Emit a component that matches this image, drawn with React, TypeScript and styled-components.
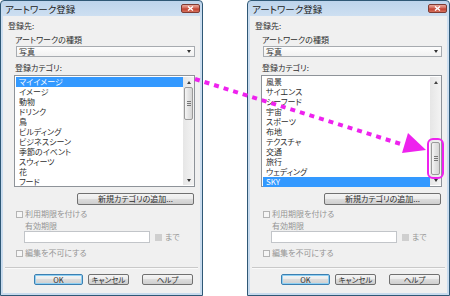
import styled, { createGlobalStyle } from "styled-components";

const GlobalStyle = createGlobalStyle`
  html, body {
    margin: 0;
    padding: 0;
    background: #fff;
  }
  body {
    font-family: "Noto Sans CJK JP", "Liberation Sans", sans-serif;
    font-feature-settings: "palt";
    color: #2e2e2e;
  }
`;

const Page = styled.div`
  position: relative;
  width: 450px;
  height: 296px;
  display: flex;
  gap: 44px;
  overflow: hidden;
`;

const Window = styled.div`
  width: 203px;
  height: 296px;
  box-sizing: border-box;
  border: 1px solid #2f5876;
  border-radius: 4px 4px 0 0;
  background: linear-gradient(#bdd4ec, #cddff1 15px, #c8dbee);
  display: flex;
  flex-direction: column;
`;

const TitleBar = styled.div`
  height: 15px;
  display: flex;
  align-items: center;
  justify-content: space-between;
  padding: 0 2px 0 4px;
`;

const Title = styled.span`
  font-size: 9.5px;
  line-height: 12px;
  color: #222;
`;

const CloseButton = styled.div`
  width: 19px;
  height: 9px;
  box-sizing: border-box;
  border: 1px solid #7e3b33;
  border-radius: 2px;
  background: linear-gradient(#e9a99c, #d36a5c 45%, #c2402f 55%, #d5725f);
  display: flex;
  align-items: center;
  justify-content: center;
`;

const Body = styled.div`
  flex: 1;
  margin: 0 2px 2px;
  background: #f0f0f0;
  padding: 5px 5px 0 5px;
  display: flex;
  flex-direction: column;
`;

const Label = styled.div<{ $disabled?: boolean }>`
  font-size: 8px;
  line-height: 10px;
  height: 10px;
  white-space: nowrap;
  color: ${(p) => (p.$disabled ? "#959595" : "#2e2e2e")};
`;

const Section = styled.div`
  margin-left: 7px;
  display: flex;
  flex-direction: column;
`;

const SubLabel = styled(Label)`
  margin-top: 4px;
`;

const Combo = styled.div`
  margin: 1px 0 0 1px;
  height: 11px;
  box-sizing: border-box;
  border: 1px solid #a7abb0;
  background: linear-gradient(#fdfdfd, #f1f1f1);
  display: flex;
  align-items: center;
  justify-content: space-between;
  padding: 0 3px 0 2px;
  font-size: 8px;
`;

const DownTriangle = styled.span`
  width: 0;
  height: 0;
  border-left: 2.5px solid transparent;
  border-right: 2.5px solid transparent;
  border-top: 3px solid #333;
`;

const UpTriangle = styled.span`
  width: 0;
  height: 0;
  border-left: 2.5px solid transparent;
  border-right: 2.5px solid transparent;
  border-bottom: 3px solid #444;
`;

const CategoryLabel = styled(Label)`
  margin-top: 6px;
`;

const ListBox = styled.div`
  margin: 2px 0 0 -1px;
  height: 112px;
  box-sizing: border-box;
  border: 1px solid #8e9399;
  background: #fff;
  padding: 1px 0 1px 1px;
  display: flex;
`;

const Items = styled.div`
  flex: 1;
  display: flex;
  flex-direction: column;
`;

const Item = styled.div<{ $selected?: boolean }>`
  height: 10px;
  line-height: 10px;
  font-size: 8px;
  padding-left: 3px;
  white-space: nowrap;
  color: ${(p) => (p.$selected ? "#fff" : "#2e2e2e")};
  background: ${(p) => (p.$selected ? "#3399ff" : "transparent")};
`;

const ScrollBar = styled.div`
  width: 11px;
  display: flex;
  flex-direction: column;
  background: linear-gradient(90deg, #e6e6e6, #f3f3f3);
`;

const Arrow = styled.div`
  height: 10px;
  display: flex;
  align-items: center;
  justify-content: center;
`;

const Track = styled.div<{ $end?: boolean }>`
  flex: 1;
  display: flex;
  flex-direction: column;
  justify-content: ${(p) => (p.$end ? "flex-end" : "flex-start")};
  padding: 0 1px;
`;

const Thumb = styled.div<{ $marked?: boolean }>`
  height: 33px;
  box-sizing: border-box;
  border: 1px solid #9a9a9a;
  border-radius: 2px;
  background: linear-gradient(90deg, #f5f5f5, #e3e3e3 50%, #d6d6d6);
  display: flex;
  align-items: center;
  justify-content: center;
  outline: ${(p) => (p.$marked ? "2px solid #ee22ee" : "none")};
  outline-offset: 2px;
`;

const Grip = styled.div`
  width: 4px;
  height: 6px;
  background: repeating-linear-gradient(#777 0 1px, transparent 1px 2px);
`;

const AddButton = styled.div`
  align-self: flex-end;
  margin: 6px 1px 0 0;
  width: 117px;
  height: 12px;
  box-sizing: border-box;
  border: 1px solid #707070;
  border-radius: 2px;
  background: linear-gradient(#f4f4f4, #ebebeb 50%, #dcdcdc 50%, #cfcfcf);
  font-size: 8px;
  line-height: 10px;
  text-align: center;
`;

const CheckRow = styled.div<{ $gap: number }>`
  margin: ${(p) => p.$gap}px 0 0 1px;
  display: flex;
  align-items: center;
  gap: 2px;
`;

const CheckBox = styled.span`
  width: 7px;
  height: 7px;
  box-sizing: border-box;
  border: 1px solid #b4b4b4;
  background: #f6f6f6;
`;

const ExpiryLabel = styled(Label)`
  margin: 2px 0 0 10px;
`;

const DateRow = styled.div`
  margin-left: 9px;
  display: flex;
  align-items: center;
`;

const DateInput = styled.div`
  width: 126px;
  height: 12px;
  box-sizing: border-box;
  border: 1px solid #c2c5c9;
  background: #fff;
`;

const CalendarStub = styled.span`
  width: 7px;
  height: 7px;
  margin: 0 3px 0 5px;
  background: #cfcfcf;
`;

const Separator = styled.div`
  margin: 9px -3px 0 -3px;
  height: 1px;
  background: #c9c9c9;
  box-shadow: 0 1px 0 #fafafa;
`;

const ButtonRow = styled.div`
  margin: 6px 0 0 26px;
  display: flex;
`;

const DialogButton = styled.div<{ $w: number; $gap: number; $default?: boolean }>`
  width: ${(p) => p.$w}px;
  margin-left: ${(p) => p.$gap}px;
  height: 11px;
  box-sizing: border-box;
  border: 1px solid ${(p) => (p.$default ? "#3c7fb1" : "#707070")};
  border-radius: 2px;
  box-shadow: ${(p) => (p.$default ? "inset 0 0 0 1px #8fd0f3" : "none")};
  background: linear-gradient(#f4f4f4, #ebebeb 50%, #dcdcdc 50%, #cfcfcf);
  font-size: 7.5px;
  line-height: 9px;
  text-align: center;
`;

const Overlay = styled.svg`
  position: absolute;
  left: 0;
  top: 0;
  pointer-events: none;
`;

const leftItems = [
  "マイイメージ",
  "イメージ",
  "動物",
  "ドリンク",
  "鳥",
  "ビルディング",
  "ビジネスシーン",
  "季節のイベント",
  "スウィーツ",
  "花",
  "フード",
];

const rightItems = [
  "風景",
  "サイエンス",
  "シーフード",
  "宇宙",
  "スポーツ",
  "布地",
  "テクスチャ",
  "交通",
  "旅行",
  "ウェディング",
  "SKY",
];

interface DialogProps {
  items: string[];
  selected: number;
  scrolledDown?: boolean;
}

const Dialog = ({ items, selected, scrolledDown }: DialogProps) => (
  <Window>
    <TitleBar>
      <Title>アートワーク登録</Title>
      <CloseButton>
        <svg width="7" height="5" viewBox="0 0 7 5">
          <path d="M1 0.5 L6 4.5 M6 0.5 L1 4.5" stroke="#fff" strokeWidth="1.4" />
        </svg>
      </CloseButton>
    </TitleBar>
    <Body>
      <Label>登録先:</Label>
      <Section>
        <SubLabel>アートワークの種類</SubLabel>
        <Combo>
          <span>写真</span>
          <DownTriangle />
        </Combo>
        <CategoryLabel>登録カテゴリ:</CategoryLabel>
        <ListBox>
          <Items>
            {items.map((it, i) => (
              <Item key={it} $selected={i === selected}>
                {it}
              </Item>
            ))}
          </Items>
          <ScrollBar>
            <Arrow>
              <UpTriangle />
            </Arrow>
            <Track $end={scrolledDown}>
              <Thumb $marked={scrolledDown}>
                <Grip />
              </Thumb>
            </Track>
            <Arrow>
              <DownTriangle />
            </Arrow>
          </ScrollBar>
        </ListBox>
        <AddButton>新規カテゴリの追加...</AddButton>
        <CheckRow $gap={4}>
          <CheckBox />
          <Label $disabled>利用期限を付ける</Label>
        </CheckRow>
        <ExpiryLabel $disabled>有効期限</ExpiryLabel>
        <DateRow>
          <DateInput />
          <CalendarStub />
          <Label $disabled>まで</Label>
        </DateRow>
        <CheckRow $gap={5}>
          <CheckBox />
          <Label $disabled>編集を不可にする</Label>
        </CheckRow>
      </Section>
      <Separator />
      <ButtonRow>
        <DialogButton $w={49} $gap={0} $default>
          OK
        </DialogButton>
        <DialogButton $w={41} $gap={5}>
          キャンセル
        </DialogButton>
        <DialogButton $w={51} $gap={13}>
          ヘルプ
        </DialogButton>
      </ButtonRow>
    </Body>
  </Window>
);

const App = () => (
  <>
    <GlobalStyle />
    <Page>
      <Dialog items={leftItems} selected={0} />
      <Dialog items={rightItems} selected={10} scrolledDown />
      <Overlay width="450" height="296" viewBox="0 0 450 296">
        <line
          x1="195"
          y1="79"
          x2="404"
          y2="145"
          stroke="#ee22ee"
          strokeWidth="4"
          strokeDasharray="5 5"
        />
        <polygon points="426,150 408,133 402,153" fill="#ee22ee" />
      </Overlay>
    </Page>
  </>
);

export default App;
